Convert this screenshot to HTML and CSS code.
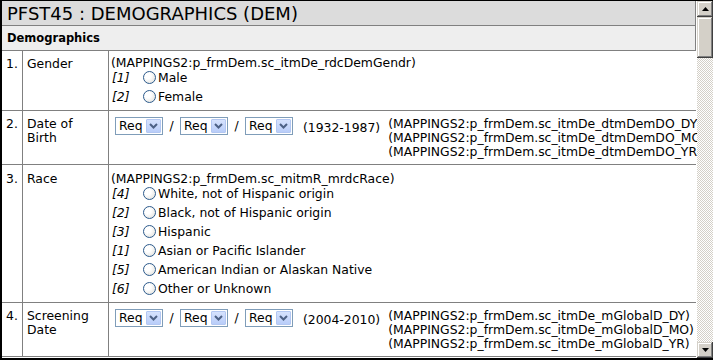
FILE: index.html
```html
<!DOCTYPE html>
<html lang="en">
<head>
  <meta charset="UTF-8">
  <meta name="viewport" content="width=device-width, initial-scale=1.0">
  <title>PFST45 : DEMOGRAPHICS (DEM)</title>
  <link rel="stylesheet" href="styles.css">
</head>
<body>
  <div class="frame">
    <div class="view">
      <div class="title">PFST45 : DEMOGRAPHICS (DEM)</div>
      <div class="section">Demographics</div>

      <div class="rows">
        <!-- 1. gender -->
        <div class="num">1.</div>
        <div class="label">Gender</div>
        <div class="field">
          <div class="map">(MAPPINGS2:p_frmDem.sc_itmDe_rdcDemGendr)</div>
          <div class="opts">
            <div class="opt"><i class="code">[1]</i><span class="radio"></span>Male</div>
            <div class="opt"><i class="code">[2]</i><span class="radio"></span>Female</div>
          </div>
        </div>

        <!-- 2. date of birth -->
        <div class="num">2.</div>
        <div class="label">Date of Birth</div>
        <div class="field date">
          <div class="pick">
            <span class="sel"><span class="sel-val">Req</span><span class="sel-btn"><svg width="9" height="6" viewBox="0 0 9 6"><path d="M1 1l3.5 3.5L8 1" fill="none" stroke="#4d6185" stroke-width="2"/></svg></span></span>
            <span class="slash">/</span>
            <span class="sel"><span class="sel-val">Req</span><span class="sel-btn"><svg width="9" height="6" viewBox="0 0 9 6"><path d="M1 1l3.5 3.5L8 1" fill="none" stroke="#4d6185" stroke-width="2"/></svg></span></span>
            <span class="slash">/</span>
            <span class="sel"><span class="sel-val">Req</span><span class="sel-btn"><svg width="9" height="6" viewBox="0 0 9 6"><path d="M1 1l3.5 3.5L8 1" fill="none" stroke="#4d6185" stroke-width="2"/></svg></span></span>
          </div>
          <span class="range">(1932-1987)</span>
          <div class="maps">
            <div>(MAPPINGS2:p_frmDem.sc_itmDe_dtmDemDO_DY)</div>
            <div>(MAPPINGS2:p_frmDem.sc_itmDe_dtmDemDO_MO)</div>
            <div>(MAPPINGS2:p_frmDem.sc_itmDe_dtmDemDO_YR)</div>
          </div>
        </div>

        <!-- 3. race -->
        <div class="num race">3.</div>
        <div class="label race">Race</div>
        <div class="field race">
          <div class="map">(MAPPINGS2:p_frmDem.sc_mitmR_mrdcRace)</div>
          <div class="opts">
            <div class="opt"><i class="code">[4]</i><span class="radio"></span>White, not of Hispanic origin</div>
            <div class="opt"><i class="code">[2]</i><span class="radio"></span>Black, not of Hispanic origin</div>
            <div class="opt"><i class="code">[3]</i><span class="radio"></span>Hispanic</div>
            <div class="opt"><i class="code">[1]</i><span class="radio"></span>Asian or Pacific Islander</div>
            <div class="opt"><i class="code">[5]</i><span class="radio"></span>American Indian or Alaskan Native</div>
            <div class="opt"><i class="code">[6]</i><span class="radio"></span>Other or Unknown</div>
          </div>
        </div>

        <!-- 4. screening date -->
        <div class="num">4.</div>
        <div class="label">Screening Date</div>
        <div class="field date">
          <div class="pick">
            <span class="sel"><span class="sel-val">Req</span><span class="sel-btn"><svg width="9" height="6" viewBox="0 0 9 6"><path d="M1 1l3.5 3.5L8 1" fill="none" stroke="#4d6185" stroke-width="2"/></svg></span></span>
            <span class="slash">/</span>
            <span class="sel"><span class="sel-val">Req</span><span class="sel-btn"><svg width="9" height="6" viewBox="0 0 9 6"><path d="M1 1l3.5 3.5L8 1" fill="none" stroke="#4d6185" stroke-width="2"/></svg></span></span>
            <span class="slash">/</span>
            <span class="sel"><span class="sel-val">Req</span><span class="sel-btn"><svg width="9" height="6" viewBox="0 0 9 6"><path d="M1 1l3.5 3.5L8 1" fill="none" stroke="#4d6185" stroke-width="2"/></svg></span></span>
          </div>
          <span class="range">(2004-2010)</span>
          <div class="maps">
            <div>(MAPPINGS2:p_frmDem.sc_itmDe_mGlobalD_DY)</div>
            <div>(MAPPINGS2:p_frmDem.sc_itmDe_mGlobalD_MO)</div>
            <div>(MAPPINGS2:p_frmDem.sc_itmDe_mGlobalD_YR)</div>
          </div>
        </div>
      </div>
    </div>

    <div class="scrollbar">
      <div class="sb-btn"><svg width="7" height="4" viewBox="0 0 7 4"><path d="M3.5 0L7 4H0z" fill="#000"/></svg></div>
      <div class="sb-thumb"></div>
      <div class="sb-track"></div>
      <div class="sb-btn"><svg width="7" height="4" viewBox="0 0 7 4"><path d="M0 0h7L3.5 4z" fill="#000"/></svg></div>
    </div>
  </div>
</body>
</html>
```

FILE: styles.css
```css
body {
  margin: 0;
  font-family: "DejaVu Sans", Verdana, sans-serif;
  font-size: 12.4px;
  color: #000;
  background: #fff;
}
.frame {
  width: 713px;
  height: 360px;
  box-sizing: border-box;
  border-top: 1px solid #000;
  border-left: 2px solid #000;
  border-bottom: 2px solid #000;
  display: flex;
}
.view {
  width: 695px;
  overflow: hidden;
  background: #fff;
}
.title {
  width: 694px;
  box-sizing: border-box;
  height: 25px;
  padding: 1px 0 0 5px;
  line-height: 23px;
  font-size: 18px;
  background: #dcdcdc;
  border-right: 1px solid #808080;
  border-bottom: 1px solid #808080;
  white-space: nowrap;
}
.section {
  width: 694px;
  box-sizing: border-box;
  height: 25px;
  padding-left: 5px;
  line-height: 24px;
  font-size: 11.5px;
  font-weight: bold;
  background: #eeeeee;
  border-right: 1px solid #808080;
  border-bottom: 1px solid #808080;
}
.rows {
  display: grid;
  grid-template-columns: 21px 86px 587px;
  width: 694px;
  line-height: 14px;
}
.rows > div {
  box-sizing: border-box;
  border-bottom: 1px solid #808080;
}
.num,
.label {
  border-right: 1px solid #808080;
  padding: 6px 0 0 4px;
}
.label {
  padding-right: 5px;
}
.num.race,
.label.race {
  padding-top: 7px;
}
.field {
  padding: 5px 0 4px 2px;
  white-space: nowrap;
}
.field.race {
  padding-top: 7px;
}
.opts {
  margin-top: -2px;
}
.opt {
  height: 19px;
  display: flex;
  align-items: center;
}
.code {
  width: 30px;
  padding-left: 1px;
  box-sizing: border-box;
}
.radio {
  width: 13px;
  height: 13px;
  box-sizing: border-box;
  margin: 0 2px 0 2px;
  border: 1px solid #2c5a8c;
  border-radius: 50%;
  background: radial-gradient(circle at 35% 35%, #fff 30%, #dcdcd6 100%);
}
.field.date {
  display: flex;
  align-items: flex-start;
  padding: 6px 0 5px 2px;
}
.pick {
  display: flex;
  margin-left: 4px;
}
.sel {
  width: 48px;
  height: 18px;
  box-sizing: border-box;
  border: 1px solid #7f9db9;
  display: flex;
  align-items: center;
  justify-content: space-between;
  padding: 1px;
  background: #fff;
}
.sel-val {
  padding-left: 2px;
}
.sel-btn {
  width: 15px;
  height: 14px;
  box-sizing: border-box;
  border: 1px solid #b3c7f2;
  border-radius: 1px;
  background: linear-gradient(#d6e2fd, #b9cdf9);
  display: flex;
  align-items: center;
  justify-content: center;
}
.slash {
  width: 17px;
  text-align: center;
  line-height: 18px;
}
.range {
  margin: 4px 0 0 10px;
}
.maps {
  margin-left: 8px;
}
.scrollbar {
  width: 16px;
  display: flex;
  flex-direction: column;
}
.sb-btn,
.sb-thumb {
  background: #d4d0c8;
  box-shadow: inset -1px -1px #404040, inset 1px 1px #d4d0c8, inset -2px -2px #808080, inset 2px 2px #fff;
}
.sb-btn {
  height: 16px;
  display: flex;
  align-items: center;
  justify-content: center;
}
.sb-thumb {
  height: 41px;
}
.sb-track {
  flex: 1;
  background: repeating-conic-gradient(#d4d0c8 0 25%, #fff 0 50%) 0 0 / 2px 2px;
}
```
